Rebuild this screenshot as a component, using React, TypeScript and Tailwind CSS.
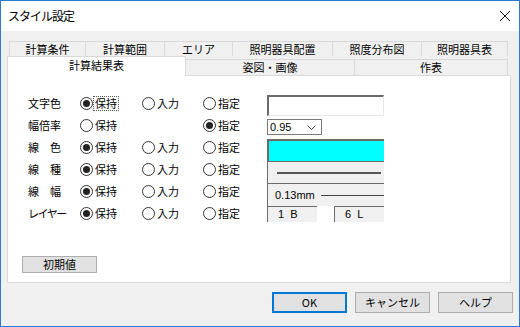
const Radio = ({ checked, label, focus }: { checked?: boolean; label: string; focus?: boolean }) => (
    <div className="flex items-center gap-[1px]">
        <span className="w-[13px] h-[13px] rounded-full border border-[#333] bg-white flex items-center justify-center">
            {checked && <span className="w-[7px] h-[7px] rounded-full bg-[#222]" />}
        </span>
        <span className={focus ? "outline outline-1 outline-dotted outline-[#555] leading-[13px] px-[1px]" : "leading-[13px] px-[1px]"}>{label}</span>
    </div>
);

const rows = [
    { label: "文字色", r: [true, false, false], show: [true, true, true] },
    { label: "幅倍率", r: [false, false, true], show: [true, false, true] },
    { label: "線　色", r: [true, false, false], show: [true, true, true] },
    { label: "線　種", r: [true, false, false], show: [true, true, true] },
    { label: "線　幅", r: [true, false, false], show: [true, true, true] },
    { label: "レイヤー", r: [true, false, false], show: [true, true, true] },
];

const Control = ({ i }: { i: number }) => {
    if (i === 0)
        return <div className="mt-[3px] w-[117px] h-[21px] bg-white border-t-2 border-l-2 border-[#6a6a6a] border-r border-b border-r-[#e6e6e6] border-b-[#e6e6e6]" />;
    if (i === 1)
        return (
            <div className="mt-[5px] w-[55px] h-[16px] bg-white border border-[#7a7a7a] flex items-center justify-between pl-[2px] pr-[5px] font-['Liberation_Sans'] text-[11px]">
                <span>0.95</span>
                <svg width="9" height="5" viewBox="0 0 9 5"><path d="M0.5 0.5 L4.5 4.5 L8.5 0.5" fill="none" stroke="#444" strokeWidth="1" /></svg>
            </div>
        );
    if (i === 2)
        return <div className="mt-[3px] w-[117px] h-[22px] bg-[#00ffff] border-t-2 border-l-2 border-[#6a6a6a]" />;
    if (i === 3)
        return (
            <div className="mt-[3px] w-[117px] h-[22px] bg-[#f0f0f0] border-t border-l border-[#6a6a6a] flex items-center pl-[9px]">
                <div className="w-[104px] h-[2px] bg-[#555]" />
            </div>
        );
    if (i === 4)
        return (
            <div className="mt-[3px] w-[117px] h-[23px] bg-[#f0f0f0] border-t border-l border-[#6a6a6a] flex items-center pl-[7px] gap-[6px] font-['Liberation_Sans'] text-[11px]">
                <span>0.13mm</span>
                <div className="w-[65px] h-[1px] bg-[#444]" />
            </div>
        );
    return (
        <div className="mt-[4px] w-[117px] h-[16px] flex justify-between font-['Liberation_Sans'] text-[11px]">
            <div className="w-[50px] bg-[#f0f0f0] border-t border-l border-[#6a6a6a] pl-[10px] leading-[14px]">1&nbsp;&nbsp;B</div>
            <div className="w-[50px] bg-[#f0f0f0] border-t border-l border-[#6a6a6a] pl-[10px] leading-[14px]">6&nbsp;&nbsp;L</div>
        </div>
    );
};

const App = () => {
    const topTabs = [
        ["計算条件", "w-[77px]"],
        ["計算範囲", "w-[79px]"],
        ["エリア", "w-[68px]"],
        ["照明器具配置", "w-[100px]"],
        ["照度分布図", "w-[89px]"],
        ["照明器具表", "w-[86px]"],
    ];

    return (
        <div className="w-[520px] h-[327px] border border-[#2b7bd0] bg-[#f0f0f0] flex flex-col text-[11px] text-black font-['Noto_Sans_CJK_JP',sans-serif]">
            <div className="h-[30px] bg-white flex items-center justify-between pl-[7px] pr-[9px]">
                <span className="text-[12px] tracking-[-1px]">スタイル設定</span>
                <svg width="10" height="10" viewBox="0 0 10 10"><path d="M0 0 L10 10 M10 0 L0 10" stroke="#111" strokeWidth="1" /></svg>
            </div>

            <div className="flex flex-col">
                <div className="flex mt-[10px] ml-[8px] h-[15px]">
                    {topTabs.map(([t, w], k) => (
                        <div key={t} className={`${w} h-[15px] bg-[#f0f0f0] border-t border-r border-[#d9d9d9] ${k === 0 ? "border-l" : ""} flex items-center justify-center leading-none`}>{t}</div>
                    ))}
                </div>
                <div className="flex ml-[6px] h-[19px] items-end">
                    <div className="relative z-10 w-[179px] h-[20px] mb-[-1px] bg-white border-t border-l border-r border-[#d9d9d9] flex items-center justify-center leading-none pb-[2px]">計算結果表</div>
                    <div className="w-[169px] h-[16px] bg-[#f0f0f0] border-t border-r border-[#d9d9d9] flex items-center justify-center leading-none">姿図・画像</div>
                    <div className="w-[153px] h-[16px] bg-[#f0f0f0] border-t border-r border-[#d9d9d9] flex items-center justify-center leading-none">作表</div>
                </div>

                <div className="ml-[6px] w-[504px] h-[208px] bg-white border border-[#d9d9d9] pt-[16px] pl-[14px] flex flex-col">
                    <div className="ml-[6px] flex flex-col">
                        {rows.map((row, i) => (
                            <div key={row.label} className="h-[22px] grid grid-cols-[52px_62px_61px_64px_117px] items-start">
                                <span className={i === 5 ? "leading-[22px] tracking-[-1.5px]" : "leading-[22px]"}>{row.label}</span>
                                {row.r.map((c, j) => (
                                    <div key={j} className="h-[22px] flex items-center">
                                        {row.show[j] && <Radio checked={c} label={["保持", "入力", "指定"][j]} focus={i === 0 && j === 0} />}
                                    </div>
                                ))}
                                <Control i={i} />
                            </div>
                        ))}
                    </div>
                    <button className="mt-[32px] w-[75px] h-[17px] bg-[#e1e1e1] border border-[#adadad] flex items-center justify-center leading-none">初期値</button>
                </div>

                <div className="flex justify-end gap-[8px] mt-[9px] pr-[6px]">
                    <button className="w-[75px] h-[21px] bg-[#e1e1e1] border-2 border-[#0078d7] flex items-center justify-center leading-none">OK</button>
                    <button className="w-[75px] h-[21px] bg-[#e1e1e1] border border-[#adadad] flex items-center justify-center leading-none">キャンセル</button>
                    <button className="w-[75px] h-[21px] bg-[#e1e1e1] border border-[#adadad] flex items-center justify-center leading-none">ヘルプ</button>
                </div>
            </div>
        </div>
    );
};

export default App;
